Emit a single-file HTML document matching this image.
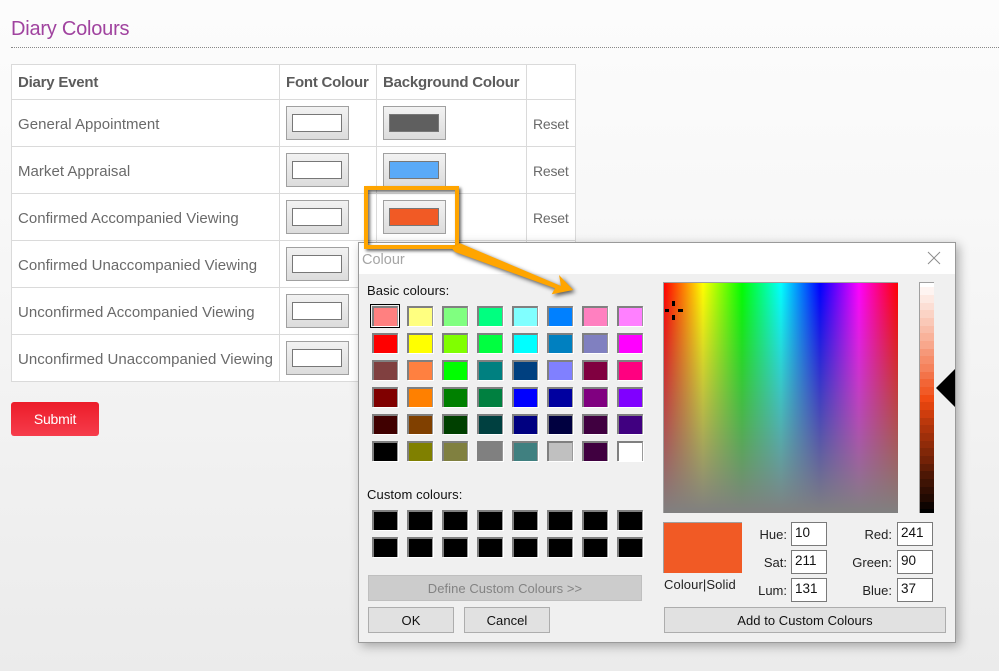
<!DOCTYPE html>
<html><head><meta charset="utf-8"><title>Diary Colours</title>
<style>
html,body{margin:0;padding:0}
body{width:999px;height:671px;overflow:hidden;position:relative;background:linear-gradient(#fcfcfc 0,#f8f8f8 200px,#ebebeb 671px);font-family:"Liberation Sans",sans-serif}
.a{position:absolute;white-space:nowrap}
.tb{position:absolute;left:11px;top:64px;width:565px;height:318px;background:#fff;border:0}
.h,.v{position:absolute;background:#dadada}
.h{left:11px;width:565px;height:1px}
.v{top:64px;width:1px;height:318px}
.t{color:#6a6a6a;font-size:15px;letter-spacing:.03px;line-height:18px}
.b{font-weight:bold;color:#5c5c5c;font-size:15px;letter-spacing:-.22px;line-height:18px}
.btn{position:absolute;width:63px;height:34px;box-sizing:border-box;border:1px solid #a0a0a0;background:linear-gradient(#f2f2f2,#dcdcdc)}
.btn i{position:absolute;left:5px;top:7px;border:1px solid #777;box-sizing:content-box;width:48px;height:16px;display:block;background:#fff}
.d{font-family:"Liberation Sans",sans-serif;font-size:13px;color:#111;line-height:16px}
.grid{position:absolute;left:372px;display:grid;grid-template-columns:repeat(8,26px);column-gap:9px;row-gap:7px}
.grid b{display:block;box-sizing:border-box;width:26px;height:20px;border-top:2px solid #808080;border-left:2px solid #808080;border-right:1px solid #9a9a9a;box-shadow:1px 1px 0 #fff}
.wb{position:absolute;box-sizing:border-box;border:1px solid #adadad;background:#e1e1e1;text-align:center;font-size:13px;line-height:25px;color:#111;height:26px;letter-spacing:.05px}
.in{position:absolute;box-sizing:border-box;width:36px;height:24px;border:1px solid #7a7a7a;background:#fff;font-size:13.5px;line-height:19px;padding-left:3px;color:#111}
.l{position:absolute;text-align:right;font-size:13px;line-height:16px;color:#222;width:60px}
</style></head><body>
<div class="a" style="left:11px;top:17px;font-size:20px;line-height:24px;color:#a0439f;letter-spacing:-.22px">Diary Colours</div>
<div class="a" style="left:11px;top:47px;width:988px;border-top:1px dotted #888"></div>

<div class="tb"></div>
<div class="h" style="top:64px"></div><div class="h" style="top:99px"></div><div class="h" style="top:146px"></div><div class="h" style="top:193px"></div><div class="h" style="top:240px"></div><div class="h" style="top:287px"></div><div class="h" style="top:334px"></div><div class="h" style="top:381px"></div>
<div class="v" style="left:11px"></div><div class="v" style="left:279px"></div><div class="v" style="left:376px"></div><div class="v" style="left:526px"></div><div class="v" style="left:575px"></div>

<div class="a b" style="left:18px;top:74px">Diary Event</div>
<div class="a b" style="left:286px;top:74px">Font Colour</div>
<div class="a b" style="left:383px;top:74px">Background Colour</div>

<div class="a t" style="left:18px;top:116px">General Appointment</div>
<div class="a t" style="left:18px;top:163px">Market Appraisal</div>
<div class="a t" style="left:18px;top:210px">Confirmed Accompanied Viewing</div>
<div class="a t" style="left:18px;top:257px">Confirmed Unaccompanied Viewing</div>
<div class="a t" style="left:18px;top:304px">Unconfirmed Accompanied Viewing</div>
<div class="a t" style="left:18px;top:351px">Unconfirmed Unaccompanied Viewing</div>
<div class="a t" style="left:533px;top:115px;font-size:14px;letter-spacing:-.2px">Reset</div>
<div class="a t" style="left:533px;top:162px;font-size:14px;letter-spacing:-.2px">Reset</div>
<div class="a t" style="left:533px;top:209px;font-size:14px;letter-spacing:-.2px">Reset</div>

<div class="btn" style="left:286px;top:106px"><i></i></div>
<div class="btn" style="left:286px;top:153px"><i></i></div>
<div class="btn" style="left:286px;top:200px"><i></i></div>
<div class="btn" style="left:286px;top:247px"><i></i></div>
<div class="btn" style="left:286px;top:294px"><i></i></div>
<div class="btn" style="left:286px;top:341px"><i></i></div>
<div class="btn" style="left:383px;top:106px"><i style="background:#5f5f5f"></i></div>
<div class="btn" style="left:383px;top:153px"><i style="background:#5aaaf8"></i></div>
<div class="btn" style="left:383px;top:200px"><i style="background:#f15a25"></i></div>

<div class="a" style="left:11px;top:402px;width:88px;height:34px;border-radius:3px;background:linear-gradient(#ec1c29,#f63c4b);color:#fff;font-size:14px;line-height:34px;text-align:center;letter-spacing:-.2px">Submit</div>

<!-- Dialog -->
<div class="a" style="left:358px;top:242px;width:598px;height:401px;box-sizing:border-box;border:1px solid #9a9a9a;background:#f0f0f0;box-shadow:3px 3px 10px rgba(0,0,0,.3)"></div>
<div class="a" style="left:359px;top:243px;width:596px;height:31px;background:#fff"></div>
<div class="a" style="left:362px;top:251px;font-size:14.5px;line-height:18px;color:#a5a5a5">Colour</div>
<svg class="a" style="left:927px;top:251px" width="14" height="14"><path d="M1 1L13 13M13 1L1 13" stroke="#8c8c8c" stroke-width="1" fill="none"/></svg>

<div class="a d" style="left:367px;top:283px;letter-spacing:.1px">Basic colours:</div>
<div class="a" style="left:370px;top:304px;width:28px;height:22px;border:1px solid #000"></div>
<div class="grid" style="top:306px">
<b style="background:#ff8080"></b><b style="background:#ffff80"></b><b style="background:#80ff80"></b><b style="background:#00ff80"></b><b style="background:#80ffff"></b><b style="background:#0080ff"></b><b style="background:#ff80c0"></b><b style="background:#ff80ff"></b>
<b style="background:#ff0000"></b><b style="background:#ffff00"></b><b style="background:#80ff00"></b><b style="background:#00ff40"></b><b style="background:#00ffff"></b><b style="background:#0080c0"></b><b style="background:#8080c0"></b><b style="background:#ff00ff"></b>
<b style="background:#804040"></b><b style="background:#ff8040"></b><b style="background:#00ff00"></b><b style="background:#008080"></b><b style="background:#004080"></b><b style="background:#8080ff"></b><b style="background:#800040"></b><b style="background:#ff0080"></b>
<b style="background:#800000"></b><b style="background:#ff8000"></b><b style="background:#008000"></b><b style="background:#008040"></b><b style="background:#0000ff"></b><b style="background:#0000a0"></b><b style="background:#800080"></b><b style="background:#8000ff"></b>
<b style="background:#400000"></b><b style="background:#804000"></b><b style="background:#004000"></b><b style="background:#004040"></b><b style="background:#000080"></b><b style="background:#000040"></b><b style="background:#400040"></b><b style="background:#400080"></b>
<b style="background:#000000"></b><b style="background:#808000"></b><b style="background:#808040"></b><b style="background:#808080"></b><b style="background:#408080"></b><b style="background:#c0c0c0"></b><b style="background:#400040"></b><b style="background:#ffffff"></b>
</div>

<div class="a d" style="left:367px;top:487px;letter-spacing:.1px">Custom colours:</div>
<div class="grid" style="top:510px">
<b style="background:#000"></b><b style="background:#000"></b><b style="background:#000"></b><b style="background:#000"></b><b style="background:#000"></b><b style="background:#000"></b><b style="background:#000"></b><b style="background:#000"></b>
<b style="background:#000"></b><b style="background:#000"></b><b style="background:#000"></b><b style="background:#000"></b><b style="background:#000"></b><b style="background:#000"></b><b style="background:#000"></b><b style="background:#000"></b>
</div>

<div class="wb" style="left:368px;top:575px;width:274px;background:#ccc;border-color:#bfbfbf;color:#838383">Define Custom Colours &gt;&gt;</div>
<div class="wb" style="left:368px;top:607px;width:86px">OK</div>
<div class="wb" style="left:464px;top:607px;width:86px">Cancel</div>

<!-- Spectrum -->
<div class="a" style="left:663px;top:282px;width:235px;height:231px;box-sizing:border-box;border-top:1px solid #a0a0a0;border-left:1px solid #a0a0a0;background:linear-gradient(rgba(128,128,128,0),rgba(128,128,128,1)),linear-gradient(90deg,#f00 0,#ff0 16.67%,#0f0 33.33%,#0ff 50%,#00f 66.67%,#f0f 83.33%,#f00 100%)"></div>
<div class="a" style="left:672px;top:301px;width:3px;height:5px;background:#000"></div>
<div class="a" style="left:672px;top:315px;width:3px;height:5px;background:#000"></div>
<div class="a" style="left:665px;top:309px;width:4px;height:3px;background:#000"></div>
<div class="a" style="left:678px;top:309px;width:5px;height:3px;background:#000"></div>

<!-- Luminance -->
<svg class="a" style="left:919px;top:282px" width="15" height="231" shape-rendering="crispEdges">
<rect x="0" y="0" width="15" height="231" fill="#fff"/>
<rect x="1" y="5" width="14" height="8" fill="hsl(15,88%,97%)"/>
<rect x="1" y="13" width="14" height="8" fill="hsl(15,88%,94%)"/>
<rect x="1" y="21" width="14" height="7" fill="hsl(15,88%,91%)"/>
<rect x="1" y="28" width="14" height="8" fill="hsl(15,88%,88%)"/>
<rect x="1" y="36" width="14" height="8" fill="hsl(15,88%,85%)"/>
<rect x="1" y="44" width="14" height="7" fill="hsl(15,88%,82%)"/>
<rect x="1" y="51" width="14" height="8" fill="hsl(15,88%,79%)"/>
<rect x="1" y="59" width="14" height="8" fill="hsl(15,88%,76%)"/>
<rect x="1" y="67" width="14" height="7" fill="hsl(15,88%,72%)"/>
<rect x="1" y="74" width="14" height="8" fill="hsl(15,88%,69%)"/>
<rect x="1" y="82" width="14" height="8" fill="hsl(15,88%,66%)"/>
<rect x="1" y="90" width="14" height="7" fill="hsl(15,88%,62%)"/>
<rect x="1" y="97" width="14" height="8" fill="hsl(15,88%,58%)"/>
<rect x="1" y="105" width="14" height="8" fill="hsl(15,88%,55%)"/>
<rect x="1" y="113" width="14" height="7" fill="hsl(15,88%,51%)"/>
<rect x="1" y="120" width="14" height="8" fill="hsl(15,88%,47%)"/>
<rect x="1" y="128" width="14" height="8" fill="hsl(15,88%,43%)"/>
<rect x="1" y="136" width="14" height="7" fill="hsl(15,88%,39%)"/>
<rect x="1" y="143" width="14" height="8" fill="hsl(15,88%,36%)"/>
<rect x="1" y="151" width="14" height="8" fill="hsl(15,88%,33%)"/>
<rect x="1" y="159" width="14" height="7" fill="hsl(15,88%,30%)"/>
<rect x="1" y="166" width="14" height="8" fill="hsl(15,88%,27%)"/>
<rect x="1" y="174" width="14" height="8" fill="hsl(15,88%,24%)"/>
<rect x="1" y="182" width="14" height="7" fill="hsl(15,88%,20%)"/>
<rect x="1" y="189" width="14" height="8" fill="hsl(15,88%,16%)"/>
<rect x="1" y="197" width="14" height="8" fill="hsl(15,88%,13%)"/>
<rect x="1" y="205" width="14" height="7" fill="hsl(15,88%,10%)"/>
<rect x="1" y="212" width="14" height="8" fill="hsl(15,88%,7%)"/>
<rect x="1" y="220" width="14" height="7" fill="hsl(15,88%,3%)"/>
<rect x="1" y="227" width="14" height="4" fill="#000"/>
<rect x="0" y="0" width="1" height="231" fill="#a0a0a0"/>
<rect x="0" y="0" width="15" height="1" fill="#a0a0a0"/>
</svg>
<svg class="a" style="left:936px;top:369px" width="19" height="38"><path d="M0 19L19 0V38Z" fill="#000"/></svg>

<!-- Preview and inputs -->
<div class="a" style="left:663px;top:522px;width:79px;height:51px;box-sizing:border-box;background:#f15a25;border-top:1px solid #a0a0a0;border-left:1px solid #a0a0a0"></div>
<div class="a" style="left:664px;top:577px;font-size:13px;line-height:16px;color:#222;letter-spacing:.1px">Colour|Solid</div>

<div class="l" style="left:727px;top:527px">Hue:</div>
<div class="l" style="left:727px;top:555px">Sat:</div>
<div class="l" style="left:727px;top:583px">Lum:</div>
<div class="l" style="left:832px;top:527px">Red:</div>
<div class="l" style="left:832px;top:555px">Green:</div>
<div class="l" style="left:832px;top:583px">Blue:</div>
<div class="in" style="left:791px;top:522px">10</div>
<div class="in" style="left:791px;top:550px">211</div>
<div class="in" style="left:791px;top:578px">131</div>
<div class="in" style="left:897px;top:522px">241</div>
<div class="in" style="left:897px;top:550px">90</div>
<div class="in" style="left:897px;top:578px">37</div>
<div class="wb" style="left:664px;top:607px;width:282px">Add to Custom Colours</div>

<!-- Orange callout -->
<div class="a" style="left:364px;top:186px;width:95px;height:63px;box-sizing:border-box;border:4px solid #ffa500;box-shadow:2px 2px 3px rgba(0,0,0,.6),inset 2px 2px 3px rgba(0,0,0,.6)"></div>
<svg class="a" style="left:440px;top:235px;overflow:visible" width="150" height="75"><path d="M11.7 13.3L20 8.3L121 51L119 40L133.3 55L111.7 59.3L115 53.3L15 17Z" fill="#ffa500" style="filter:drop-shadow(2px 2px 2px rgba(0,0,0,.65))"/></svg>
</body></html>
